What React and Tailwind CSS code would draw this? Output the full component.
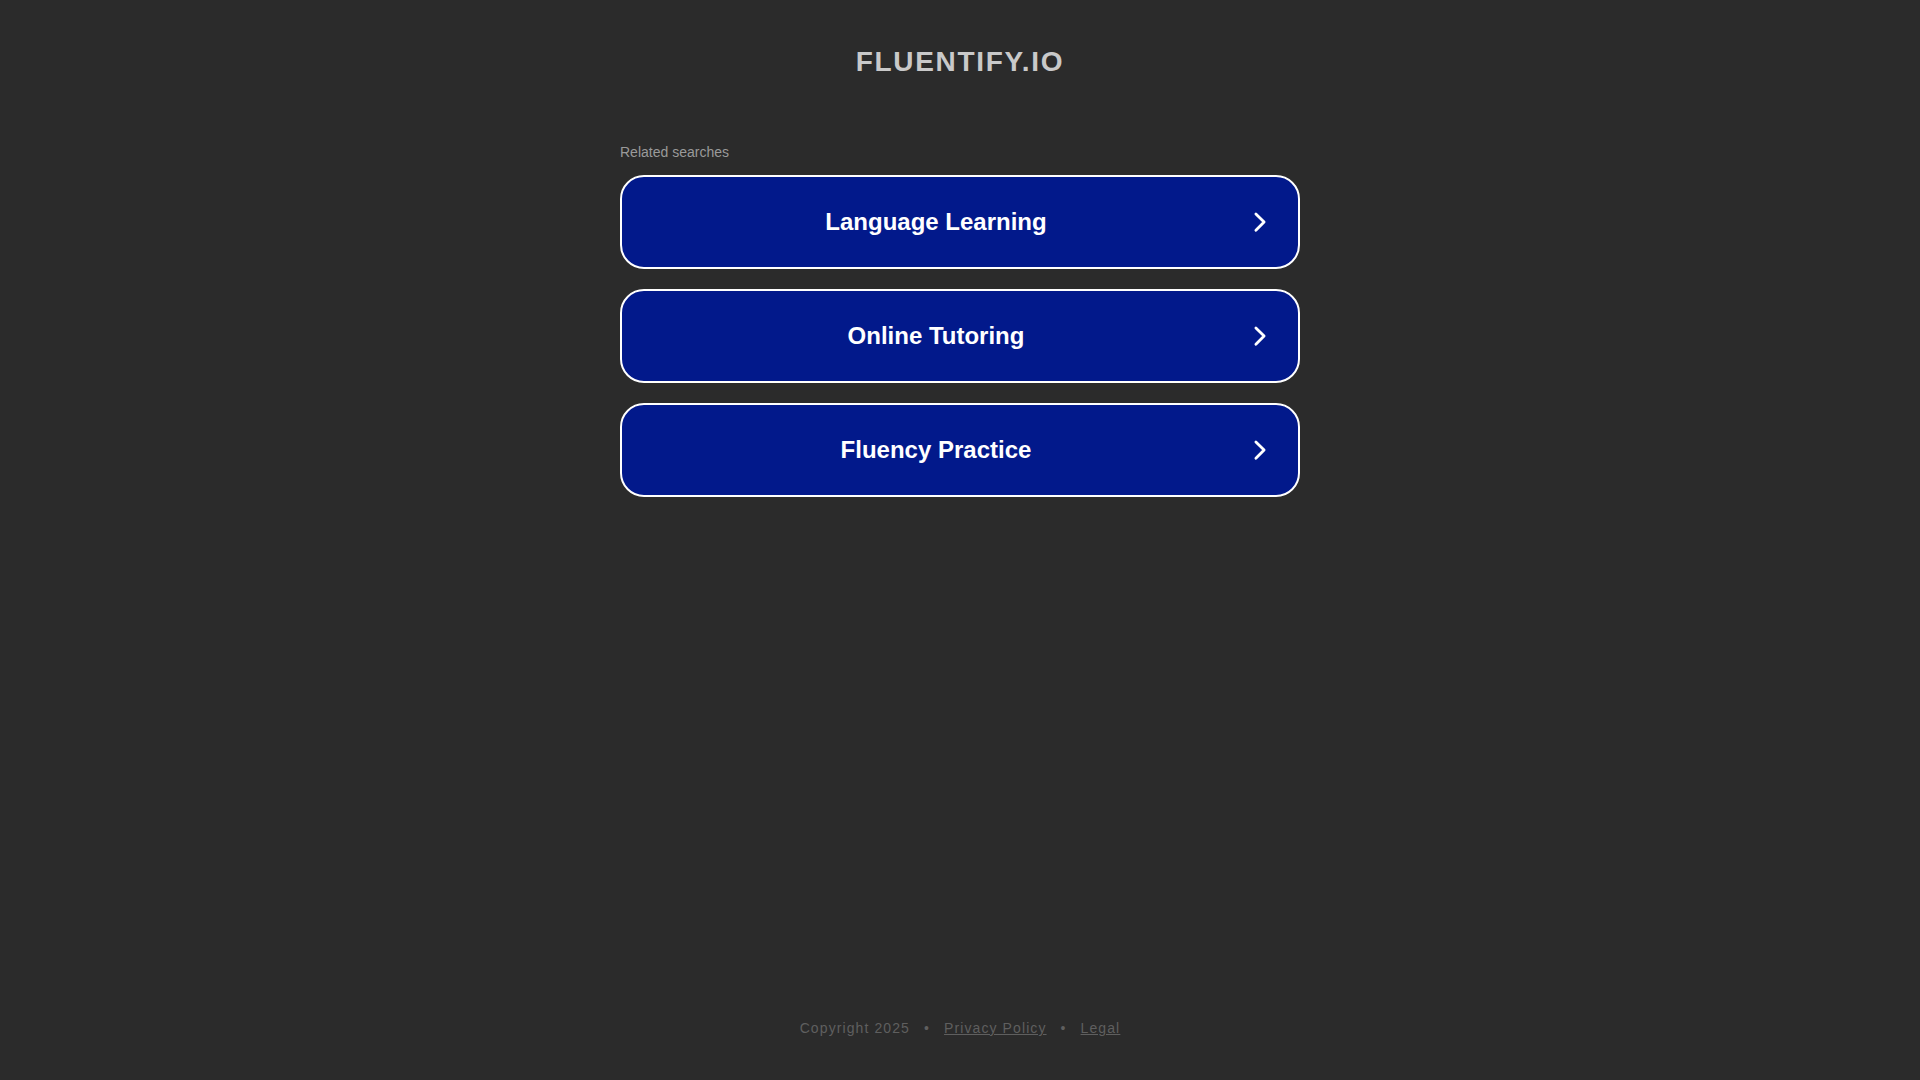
import React from "react";

const items = ["Language Learning", "Online Tutoring", "Fluency Practice"];

function Chevron() {
  return (
    <svg width="24" height="24" viewBox="0 0 24 24" fill="none" className="block">
      <path d="M7.9 4 L16.1 12.1 L7.9 20.2" stroke="#ffffff" strokeWidth="2.8" strokeLinecap="round" strokeLinejoin="round" />
    </svg>
  );
}

export default function App() {
  return (
    <div
      className="min-h-[1080px] h-[1080px] w-full bg-[#2b2b2b] flex flex-col items-center"
      style={{ fontFamily: '"Liberation Sans", Arial, sans-serif' }}
    >
      <h1 className="mt-[46px] text-[28px] leading-[32px] font-bold text-[#c9c9c9] tracking-[1.7px]">
        FLUENTIFY.IO
      </h1>
      <div className="mt-[66px] w-[680px] flex flex-col">
        <div className="text-[14px] leading-[16px] text-[#9a9a9a]">Related searches</div>
        <div className="mt-[15px] flex flex-col gap-[20px]">
          {items.map((t) => (
            <a
              key={t}
              href="#"
              className="h-[94px] rounded-[24px] border-2 border-white bg-[#02198b] flex items-center pl-[14px] pr-[14px]"
            >
              <span className="flex-1 text-center text-white font-bold text-[24px] leading-[28px]">{t}</span>
              <span className="w-[48px] flex items-center justify-center">
                <Chevron />
              </span>
            </a>
          ))}
        </div>
      </div>
      <div className="flex-1" />
      <div className="mb-[44px] text-[14px] leading-[16px] text-[#5f5f5f] tracking-[1.1px] flex items-center">
        <span>Copyright 2025</span>
        <span className="mx-[14px]">•</span>
        <a href="#" className="underline">Privacy Policy</a>
        <span className="mx-[14px]">•</span>
        <a href="#" className="underline">Legal</a>
      </div>
    </div>
  );
}
